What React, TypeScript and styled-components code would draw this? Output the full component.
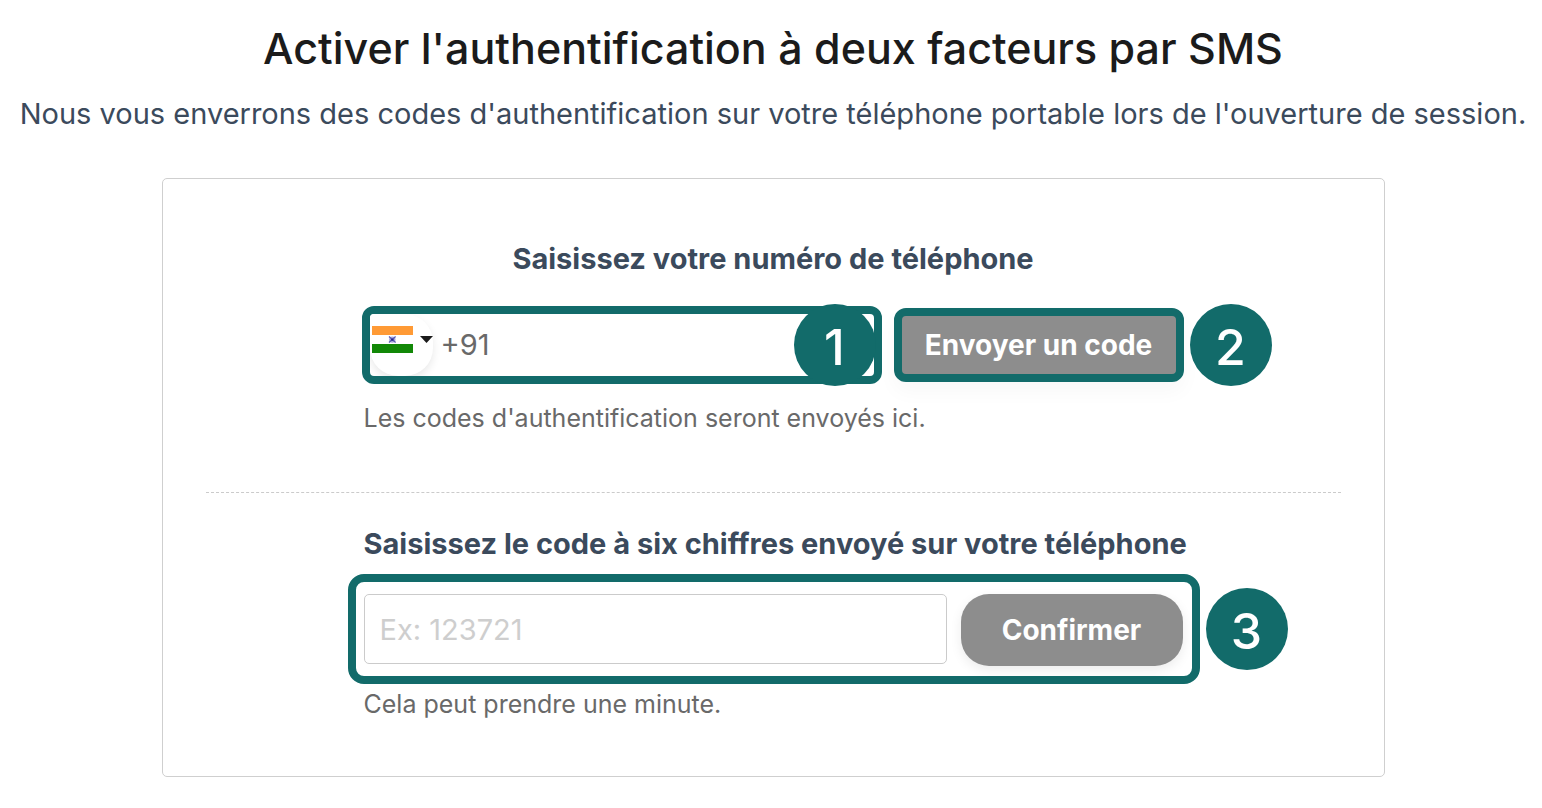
import React from "react";
import styled, { createGlobalStyle } from "styled-components";

const teal = "#126b6a";

const GlobalStyle = createGlobalStyle`
  *, *::before, *::after { box-sizing: border-box; }
  body {
    margin: 0;
    background: #fff;
    color: #3b4a5c;
    font-family: Inter, "Liberation Sans", sans-serif;
  }
  button, input { font: inherit; }
`;

const Page = styled.main`
  display: flex;
  flex-direction: column;
  align-items: center;
  padding: 19px 0 30px 4px;
`;

const Title = styled.h1`
  margin: 0 0 17px;
  color: #1b1b1b;
  font-size: 43px;
  font-weight: 500;
  line-height: 58px;
  white-space: nowrap;
`;

const Subtitle = styled.p`
  margin: 0 0 44px;
  font-size: 29px;
  line-height: 40px;
  white-space: nowrap;
`;

const Card = styled.section`
  width: calc(100% - 315px);
  min-width: 1180px;
  padding: 60px 43px 52px;
  border: 1px solid #cfcfcf;
  border-radius: 5px;
`;

const Step = styled.form`
  width: 819px;
  margin: 0 auto;
`;

const StepLabel = styled.label<{ $centered?: boolean }>`
  display: block;
  margin-bottom: ${(p) => (p.$centered ? 27 : 10)}px;
  font-size: 29px;
  font-weight: 700;
  line-height: 40px;
  text-align: ${(p) => (p.$centered ? "center" : "left")};
  white-space: nowrap;
`;

const Helper = styled.p<{ $spaced?: boolean }>`
  margin: ${(p) => (p.$spaced ? 14 : 0)}px 0 0;
  color: #696969;
  font-size: 25px;
  line-height: 40px;
`;

const Divider = styled.hr`
  margin: 54px 0 31px;
  border: 0;
  border-top: 1px dashed #cbcbcb;
`;

const PhoneRow = styled.div`
  position: relative;
  display: flex;
  align-items: center;
  gap: 12px;
  margin: 0 -1px 0 -2px;
`;

const PhoneField = styled.div`
  position: relative;
  display: flex;
  flex: 1;
  min-width: 0;
  height: 78px;
  border: 8px solid ${teal};
  border-radius: 12px;
`;

const CountryButton = styled.button`
  display: flex;
  align-items: center;
  gap: 7px;
  width: 63px;
  padding: 0 0 12px 2px;
  border: 0;
  border-radius: 4px 28px 28px 28px;
  background: #fff;
  box-shadow: 0 4px 8px rgba(0, 0, 0, 0.09);
  clip-path: inset(0 -12px 0 0);
`;

const PhoneInput = styled.input`
  flex: 1;
  min-width: 0;
  padding: 0 8px 2px;
  border: 0;
  outline: 0;
  background: transparent;
  color: #696969;
  font-size: 29px;
`;

const SendButton = styled.button`
  flex: 0 0 290px;
  height: 74px;
  padding: 0;
  border: 8px solid ${teal};
  border-radius: 12px;
  background: #8d8d8d;
  box-shadow: 0 10px 20px rgba(0, 0, 0, 0.03);
  color: #fff;
  font-size: 28px;
  font-weight: 700;
  white-space: nowrap;
`;

const CodeFrame = styled.div`
  position: relative;
  display: flex;
  align-items: flex-start;
  gap: 14px;
  height: 110px;
  margin: 0 -17px 0 -16px;
  padding: 12px 9px 0 8px;
  border: 8px solid ${teal};
  border-radius: 16px;
`;

const CodeInput = styled.input`
  flex: 1;
  min-width: 0;
  height: 70px;
  padding: 0 15px;
  border: 1px solid #cbcbcb;
  border-radius: 5px;
  outline: 0;
  background: #fff;
  color: #696969;
  font-size: 29px;
  &::placeholder { color: #cecece; opacity: 1; }
`;

const ConfirmButton = styled.button`
  width: 222px;
  height: 72px;
  padding: 0;
  border: 0;
  border-radius: 28px;
  background: #8d8d8d;
  box-shadow: 0 4px 12px rgba(0, 0, 0, 0.08);
  color: #fff;
  font-size: 28px;
  font-weight: 700;
`;

const Badge = styled.span<{ $right: number }>`
  position: absolute;
  top: 50%;
  right: ${(p) => p.$right}px;
  display: flex;
  align-items: center;
  justify-content: center;
  width: 82px;
  height: 82px;
  margin-top: -41px;
  padding-top: 4px;
  border-radius: 50%;
  background: ${teal};
  color: #fff;
  font-size: 50px;
  font-weight: 500;
  line-height: 60px;
`;

const IndiaFlag = () => (
  <svg width="41" height="27" viewBox="0 0 41 27" aria-hidden="true">
    <path fill="#fff" d="M0 0h41v27H0z" />
    <path fill="#ff9a35" d="M0 0h41v9H0z" />
    <path fill="#128807" d="M0 18h41v9H0z" />
    <circle cx="20.3" cy="13.6" r="3.2" fill="#a9a9da" />
    <path stroke="#5a5ab4" strokeWidth="1.3" d="m17 10.6 6.6 6m0-6-6.6 6" />
    <circle cx="20.3" cy="13.6" r="1.2" fill="#25258f" />
  </svg>
);

const Caret = () => (
  <svg width="13" height="7" viewBox="0 0 13 7" aria-hidden="true">
    <path fill="#1b1b1b" d="M0 0h13L6.5 7z" />
  </svg>
);

export default function App() {
  return (
    <>
      <GlobalStyle />
      <Page>
        <Title>Activer l'authentification à deux facteurs par SMS</Title>
        <Subtitle>
          Nous vous enverrons des codes d'authentification sur votre téléphone portable lors de
          l'ouverture de session.
        </Subtitle>
        <Card>
          <Step onSubmit={(e) => e.preventDefault()}>
            <StepLabel $centered htmlFor="phone">
              Saisissez votre numéro de téléphone
            </StepLabel>
            <PhoneRow>
              <PhoneField>
                <CountryButton type="button" aria-label="Inde, +91">
                  <IndiaFlag />
                  <Caret />
                </CountryButton>
                <PhoneInput id="phone" type="tel" defaultValue="+91" />
                <Badge $right={-2}>1</Badge>
              </PhoneField>
              <SendButton type="submit">Envoyer un code</SendButton>
              <Badge $right={-88}>2</Badge>
            </PhoneRow>
            <Helper $spaced>Les codes d'authentification seront envoyés ici.</Helper>
          </Step>
          <Divider />
          <Step onSubmit={(e) => e.preventDefault()}>
            <StepLabel htmlFor="code">Saisissez le code à six chiffres envoyé sur votre téléphone</StepLabel>
            <CodeFrame>
              <CodeInput id="code" type="text" inputMode="numeric" placeholder="Ex: 123721" />
              <ConfirmButton type="submit">Confirmer</ConfirmButton>
              <Badge $right={-96}>3</Badge>
            </CodeFrame>
            <Helper>Cela peut prendre une minute.</Helper>
          </Step>
        </Card>
      </Page>
    </>
  );
}
